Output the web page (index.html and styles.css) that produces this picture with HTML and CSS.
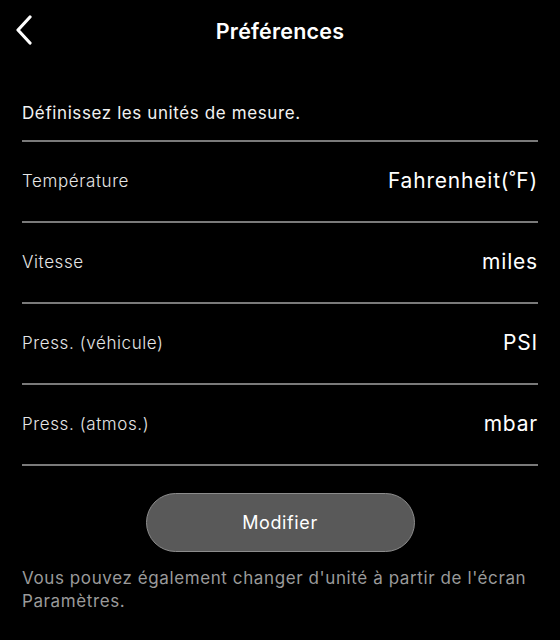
FILE: index.html
```html
<!DOCTYPE html>
<html lang="fr">
<head>
<meta charset="utf-8">
<link rel="stylesheet" href="styles.css">
</head>
<body>
<div class="screen">
  <header class="topbar">
    <button class="back" aria-label="Retour">
      <svg width="20" height="30" viewBox="0 0 20 30"><path d="M15 2 L3 15 L15 28" fill="none" stroke="#fff" stroke-width="3.2" stroke-linecap="round" stroke-linejoin="round"/></svg>
    </button>
    <h1 class="title">Préférences</h1>
  </header>
  <main class="content">
    <p class="intro">Définissez les unités de mesure.</p>
    <ul class="list">
      <li class="row"><span class="label">Température</span><span class="value">Fahrenheit(˚F)</span></li>
      <li class="row"><span class="label">Vitesse</span><span class="value">miles</span></li>
      <li class="row"><span class="label">Press. (véhicule)</span><span class="value">PSI</span></li>
      <li class="row"><span class="label">Press. (atmos.)</span><span class="value">mbar</span></li>
    </ul>
    <div class="actions"><button class="btn">Modifier</button></div>
    <p class="note">Vous pouvez également changer d'unité à partir de l'écran Paramètres.</p>
  </main>
</div>
</body>
</html>
```
FILE: styles.css
```css
* { box-sizing: border-box; }
html, body { margin: 0; padding: 0; background: #000; }
body { font-family: Inter, "Noto Sans", sans-serif; color: #fff; width: 560px; height: 640px; overflow: hidden; }
.screen { display: flex; flex-direction: column; }
.topbar { position: relative; height: 61px; display: flex; align-items: center; justify-content: center; }
.back { position: absolute; left: 15px; top: 15px; background: none; border: 0; padding: 0; width: 20px; height: 30px; display: flex; }
.title { margin: 0; font-size: 21.5px; font-weight: 600; letter-spacing: 0.2px; }
.content { padding: 0 22px; }
.intro { margin: 0; height: 81px; display: flex; align-items: center; padding-top: 24px; font-size: 17px; letter-spacing: 0.6px; color: #f2f2f2; border-bottom: 2px solid #7a7a7a; }
.list { list-style: none; margin: 0; padding: 0; }
.row { height: 81px; display: flex; align-items: center; justify-content: space-between; border-bottom: 2px solid #7a7a7a; padding-bottom: 2px; }
.label { font-size: 17px; font-weight: 300; letter-spacing: 0.6px; color: #e6e6e6; }
.value { font-size: 21px; font-weight: 400; letter-spacing: 0.8px; color: #fff; }
.actions { display: flex; justify-content: center; padding-top: 27px; }
.btn { width: 269px; height: 59px; border-radius: 30px; background: #595959; border: 1px solid #8c8c8c; color: #fff; font-family: inherit; font-size: 18px; letter-spacing: 0.6px; }
.note { margin: 15px 0 0; font-size: 17px; line-height: 23px; letter-spacing: 0.6px; color: #9a9a9a; }
```
